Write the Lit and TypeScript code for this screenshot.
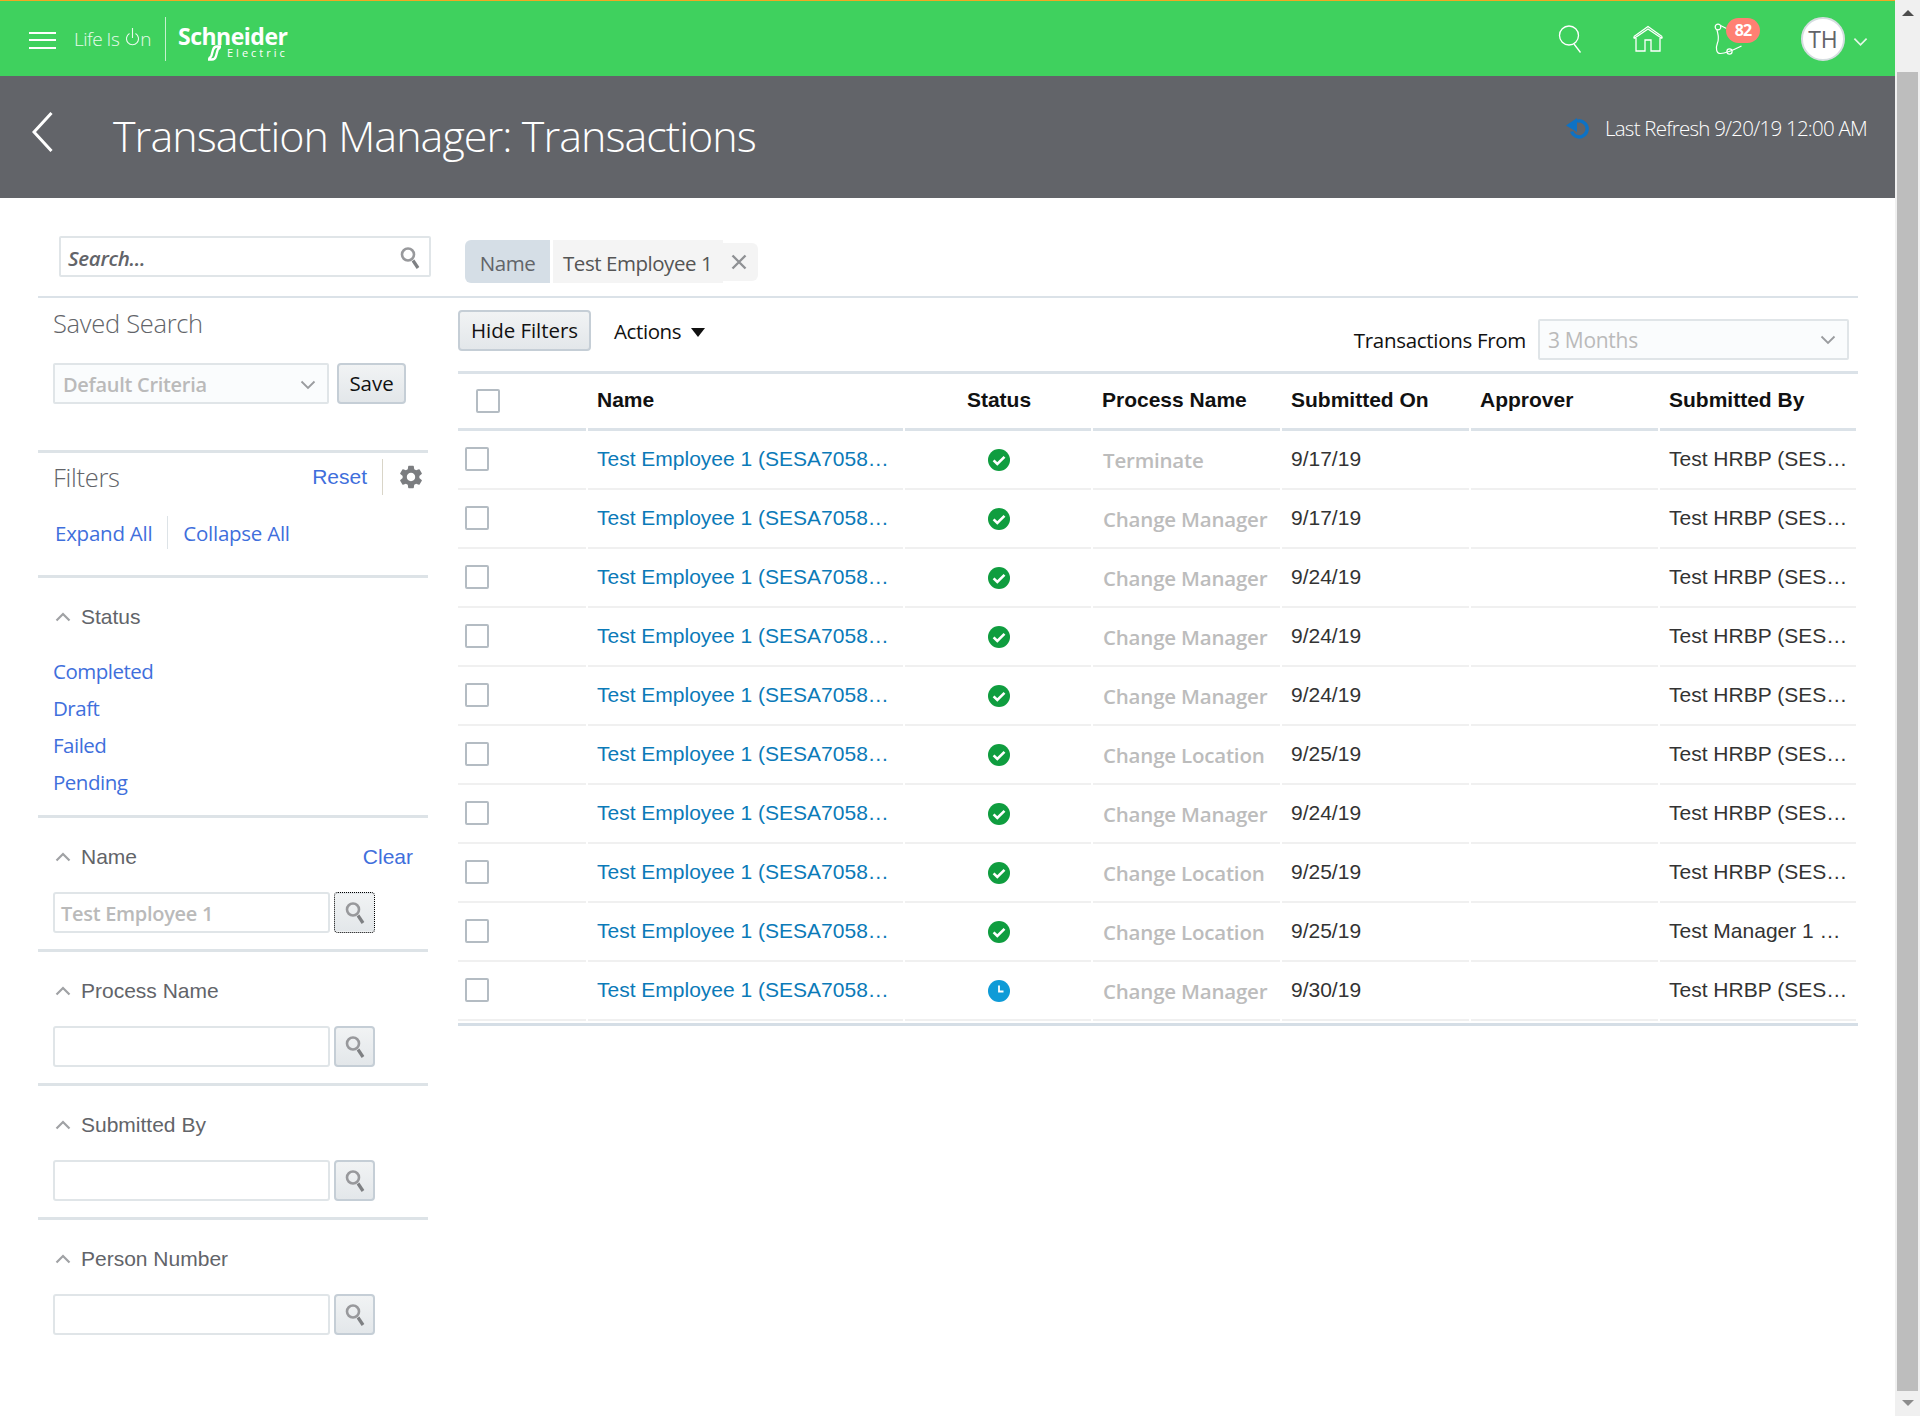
import { css, html, LitElement, svg } from 'lit';
import { customElement } from 'lit/decorators.js';

const HRBP = 'Test HRBP (SES…';

const ROWS = [
    { process: 'Terminate', date: '9/17/19', by: HRBP, status: 'done' },
    { process: 'Change Manager', date: '9/17/19', by: HRBP, status: 'done' },
    { process: 'Change Manager', date: '9/24/19', by: HRBP, status: 'done' },
    { process: 'Change Manager', date: '9/24/19', by: HRBP, status: 'done' },
    { process: 'Change Manager', date: '9/24/19', by: HRBP, status: 'done' },
    { process: 'Change Location', date: '9/25/19', by: HRBP, status: 'done' },
    { process: 'Change Manager', date: '9/24/19', by: HRBP, status: 'done' },
    { process: 'Change Location', date: '9/25/19', by: HRBP, status: 'done' },
    { process: 'Change Location', date: '9/25/19', by: 'Test Manager 1 …', status: 'done' },
    { process: 'Change Manager', date: '9/30/19', by: HRBP, status: 'pending' },
];

const GEAR =
    'M19.14 12.94c.04-.3.06-.61.06-.94 0-.32-.02-.64-.07-.94l2.03-1.58c.18-.14.23-.41.12-.61l-1.92-3.32c-.12-.22-.37-.29-.59-.22l-2.39.96c-.5-.38-1.03-.7-1.62-.94l-.36-2.54c-.04-.24-.24-.41-.48-.41h-3.84c-.24 0-.43.17-.47.41l-.36 2.54c-.59.24-1.13.57-1.62.94l-2.39-.96c-.22-.08-.47 0-.59.22L2.74 8.87c-.12.21-.08.47.12.61l2.03 1.58c-.05.3-.09.63-.09.94s.02.64.07.94l-2.03 1.58c-.18.14-.23.41-.12.61l1.92 3.32c.12.22.37.29.59.22l2.39-.96c.5.38 1.03.7 1.62.94l.36 2.54c.05.24.24.41.48.41h3.84c.24 0 .44-.17.47-.41l.36-2.54c.59-.24 1.13-.56 1.62-.94l2.39.96c.22.08.47 0 .59-.22l1.92-3.32c.12-.22.07-.47-.12-.61l-2.01-1.58zM12 15.6c-1.98 0-3.6-1.62-3.6-3.6s1.62-3.6 3.6-3.6 3.6 1.62 3.6 3.6-1.62 3.6-3.6 3.6z';

const magnifier = () => html`
    <svg class="mag" viewBox="0 0 20 24" width="20" height="24">
        <circle cx="8" cy="8.500" r="6" fill="none" stroke="#98999c" stroke-width="2.600"></circle>
        <path d="M13 14.500l5 7.500" stroke="#7e8083" stroke-width="3.200" fill="none"></path>
    </svg>
`;

const chevronDown = (color = '#8b8d90', w = 16, h = 10) => html`
    <svg viewBox="0 0 16 10" width="${w}" height="${h}">
        <path d="M1.500 1.500L8 8l6.500-6.500" fill="none" stroke="${color}" stroke-width="1.800"></path>
    </svg>
`;

const statusIcon = (status: string) =>
    status === 'done'
        ? html`<svg viewBox="0 0 22 22" width="22" height="22">
              <circle cx="11" cy="11" r="11" fill="#0f9d3f"></circle>
              ${svg`<path d="M5.600 11.400l3.700 3.600 7.200-7.200" fill="none" stroke="#fff" stroke-width="2.600"></path>`}
          </svg>`
        : html`<svg viewBox="0 0 22 22" width="22" height="22">
              <circle cx="11" cy="11" r="11" fill="#0f9bd7"></circle>
              ${svg`<path d="M11 5.500v6h4.500" fill="none" stroke="#fff" stroke-width="1.800"></path>`}
          </svg>`;

@customElement('app-root')
export class AppRoot extends LitElement {
    static override styles = css`
        :host {
            display: block;
            width: 1920px;
            height: 1416px;
            overflow: hidden;
            background: #fff;
            font-family: 'Liberation Sans', Arial, sans-serif;
            color: #333;
        }
        .page {
            display: flex;
            height: 1416px;
        }
        .content {
            width: 1895px;
        }
        .scrollbar {
            width: 25px;
            height: 1416px;
            background: #f0f0f0;
            display: flex;
            flex-direction: column;
            align-items: center;
            padding: 0 2px;
            box-sizing: border-box;
        }
        .sb-btn {
            height: 72px;
            display: flex;
            justify-content: center;
            padding-top: 10px;
            box-sizing: border-box;
        }
        .sb-btn.down {
            height: 25px;
            padding-top: 9px;
        }
        .thumb {
            width: 21px;
            height: 1319px;
            background: #bdbdbd;
        }
        .arrow-up {
            width: 0;
            height: 0;
            border: 6px solid transparent;
            border-top: 0;
            border-bottom: 6px solid #4d4d4d;
        }
        .arrow-down {
            width: 0;
            height: 0;
            border: 6px solid transparent;
            border-bottom: 0;
            border-top: 6px solid #8c8c8c;
        }

        /* top bar */
        .topbar {
            height: 75px;
            border-top: 1px solid #f5a623;
            background: #3fd15e;
            display: flex;
            align-items: center;
            color: #fff;
        }
        .burger {
            width: 27px;
            height: 17px;
            margin: 3px 0 0 29px;
            border-top: 2px solid #fff;
            border-bottom: 2px solid #fff;
            position: relative;
            box-sizing: border-box;
        }
        .burger::after {
            content: '';
            position: absolute;
            left: 0;
            right: 0;
            top: 5.500px;
            height: 2px;
            background: #fff;
        }
        .lifeison {
            margin-left: 18px;
            width: 80px;
            font: 300 19px 'Open Sans', sans-serif;
            letter-spacing: -0.500px;
            white-space: nowrap;
            display: flex;
            align-items: center;
            color: #e8faec;
        }
        .lifeison svg {
            margin: -4px 1px 0 7px;
        }
        .logo-div {
            width: 1px;
            height: 44px;
            margin: 0 12px 0 11px;
            background: rgba(255, 255, 255, 0.7);
        }
        .logo {
            width: 112px;
            display: flex;
            flex-direction: column;
            padding-top: 9px;
        }
        .logo-name {
            font: 700 23px/22px 'Open Sans', sans-serif;
            letter-spacing: -0.500px;
        }
        .logo-sub {
            display: flex;
            align-items: center;
            font: 400 11px/14px 'Open Sans', sans-serif;
            letter-spacing: 3px;
            margin: -2px 0 0 28px;
        }
        .logo-sub svg {
            margin-right: 4px;
        }
        .top-right {
            margin-left: auto;
            display: flex;
            align-items: center;
        }
        .ti-search {
            margin-right: 51px;
        }
        .ti-home {
            margin-right: 51px;
        }
        .bell {
            position: relative;
            width: 28px;
            height: 32px;
            margin-right: 59px;
        }
        .badge {
            position: absolute;
            left: 12px;
            top: -5px;
            width: 34px;
            height: 25px;
            border-radius: 13px;
            background: #ff8073;
            color: #fff;
            font: 700 16px/25px 'Open Sans', sans-serif;
            letter-spacing: -0.800px;
            text-align: center;
        }
        .avatar {
            width: 44px;
            height: 44px;
            border-radius: 50%;
            background: #fff;
            border: 2px solid #d5dde0;
            box-sizing: border-box;
            color: #626469;
            font: 400 23px/40px 'Open Sans', sans-serif;
            text-align: center;
        }
        .ti-chevron {
            margin: 6px 27px 0 8px;
        }

        /* title band */
        .band {
            height: 122px;
            background: #626469;
            color: #fff;
            display: flex;
            position: relative;
        }
        .back {
            margin: 36px 0 0 32px;
        }
        .title {
            margin: 30px 0 0 60px;
            font: 300 43px/60px 'Open Sans', sans-serif;
            letter-spacing: -0.950px;
            white-space: nowrap;
        }
        .refresh {
            margin: 30px 28px 0 auto;
            display: flex;
            align-items: center;
            height: 44px;
            font: 300 20.500px 'Open Sans', sans-serif;
            letter-spacing: -0.750px;
            white-space: nowrap;
        }
        .refresh svg {
            margin-right: 15px;
        }

        /* filter bar */
        .filterbar {
            height: 98px;
            width: 1820px;
            margin-left: 38px;
            border-bottom: 2px solid #dbe2e8;
            display: flex;
        }
        .search {
            margin: 38px 0 0 21px;
            width: 372px;
            height: 41px;
            box-sizing: border-box;
            border: 2px solid #e0e5e8;
            border-radius: 2px;
            display: flex;
            align-items: center;
            justify-content: space-between;
            padding: 2px 9px 0 7px;
            font: italic 600 20.500px 'Open Sans', sans-serif;
            letter-spacing: -0.300px;
            color: #626469;
        }
        .chips {
            margin: 42px 0 0 34px;
            display: flex;
            align-items: flex-start;
            font: 400 20.500px/47px 'Open Sans', sans-serif;
            letter-spacing: -0.450px;
        }
        .chip-name {
            width: 85px;
            height: 43px;
            background: #d5dee6;
            color: #626469;
            text-align: center;
            border-radius: 6px 0 0 6px;
        }
        .chip-value {
            margin-left: 3px;
            width: 170px;
            height: 43px;
            padding-left: 10px;
            box-sizing: border-box;
            background: #f4f4f4;
            color: #555;
        }
        .chip-x {
            margin-top: 3px;
            width: 35px;
            height: 38px;
            background: #f4f4f4;
            border-radius: 0 6px 6px 0;
            display: flex;
            align-items: center;
            justify-content: center;
            padding-right: 4px;
            box-sizing: border-box;
        }

        .columns {
            display: flex;
            margin-left: 38px;
        }

        /* sidebar */
        .sidebar {
            width: 390px;
            font-size: 21px;
            color: #626469;
        }
        .saved {
            height: 155px;
            border-bottom: 3px solid #dde3e7;
            padding: 0 0 0 15px;
            box-sizing: border-box;
        }
        .light-head {
            font: 300 25.500px/34px 'Open Sans', sans-serif;
            letter-spacing: -0.300px;
            padding-top: 8px;
            color: #626469;
        }
        .saved-row {
            display: flex;
            margin-top: 23px;
            gap: 8px;
        }
        .select {
            box-sizing: border-box;
            border: 2px solid #e0e5e8;
            border-radius: 2px;
            background: #fafcfd;
            display: flex;
            align-items: center;
            justify-content: space-between;
            color: #bababa;
            font: 600 20px 'Open Sans', sans-serif;
            letter-spacing: -0.300px;
        }
        .select.criteria {
            width: 276px;
            height: 41px;
            padding: 2px 11px 0 8px;
        }
        .btn {
            box-sizing: border-box;
            height: 41px;
            border: 2px solid #c5ced6;
            border-radius: 4px;
            background: linear-gradient(#f1f3f4, #e3e7ea);
            color: #111;
            font: 400 20.500px/37px 'Open Sans', sans-serif;
            letter-spacing: -0.050px;
            text-align: center;
        }
        .btn.save {
            width: 69px;
        }
        .filters-head {
            height: 125px;
            border-bottom: 3px solid #dde3e7;
            box-sizing: border-box;
        }
        .filters-top {
            display: flex;
            align-items: center;
            height: 47px;
            padding: 0 3px 0 15px;
        }
        .filters-top .light-head {
            padding-top: 0;
        }
        .reset {
            margin-left: auto;
            color: #3f6fdc;
        }
        .vsep {
            width: 1px;
            background: #d9d5c8;
            height: 36px;
            margin: 0 14px 0 15px;
        }
        .expand-row {
            display: flex;
            align-items: center;
            height: 33px;
            margin-top: 16px;
            padding-left: 17px;
            font: 400 20.500px 'Open Sans', sans-serif;
            letter-spacing: -0.250px;
            color: #3f6fdc;
        }
        .expand-row .vsep {
            background: #dde3e7;
            height: 33px;
            margin: 0 15px 0 15px;
        }
        .group {
            border-bottom: 3px solid #dde3e7;
            box-sizing: border-box;
            padding: 0 0 0 15px;
        }
        .group.status {
            height: 240px;
        }
        .group.field {
            height: 134px;
        }
        .group.last {
            border-bottom: 0;
        }
        .group-head {
            display: flex;
            align-items: center;
            height: 30px;
            padding-top: 24px;
        }
        .group-head svg {
            margin: 0 10px 0 2px;
        }
        .clear {
            margin-left: auto;
            margin-right: 15px;
            color: #3f6fdc;
        }
        .status-list {
            margin-top: 21px;
            font: 400 20.500px/37px 'Open Sans', sans-serif;
            letter-spacing: -0.500px;
            color: #3f6fdc;
        }
        .field-row {
            display: flex;
            margin-top: 20px;
            gap: 4px;
        }
        .field-input {
            box-sizing: border-box;
            width: 277px;
            height: 41px;
            border: 2px solid #e0e5e8;
            border-radius: 3px;
            padding-left: 6px;
            color: #bababa;
            font: 600 20px/40px 'Open Sans', sans-serif;
            letter-spacing: -0.300px;
        }
        .field-btn {
            box-sizing: border-box;
            width: 41px;
            height: 41px;
            border: 2px solid #c5ced6;
            border-radius: 4px;
            background: linear-gradient(#f1f3f4, #e3e7ea);
            display: flex;
            align-items: center;
            justify-content: center;
        }
        .field-btn.focus {
            outline: 1px dotted #000;
            outline-offset: -1px;
            border-color: transparent;
        }

        /* main */
        .main {
            width: 1400px;
            margin-left: 30px;
        }
        .toolbar {
            height: 73px;
            display: flex;
            color: #111;
        }
        .btn.hide {
            width: 133px;
            margin-top: 12px;
        }
        .actions {
            margin: 12px 0 0 23px;
            height: 41px;
            display: flex;
            align-items: center;
            gap: 10px;
            font: 400 20.500px 'Open Sans', sans-serif;
            letter-spacing: -0.400px;
        }
        .caret {
            width: 0;
            height: 0;
            margin-top: 3px;
            border: 7px solid transparent;
            border-top: 9px solid #111;
            border-bottom: 0;
        }
        .from {
            margin: 21px 0 0 auto;
            height: 41px;
            display: flex;
            align-items: center;
            font: 400 20.500px 'Open Sans', sans-serif;
            letter-spacing: -0.300px;
        }
        .select.months {
            width: 311px;
            height: 41px;
            margin: 0 9px 0 12px;
            padding: 0 11px 0 8px;
            font-weight: 400;
            font-size: 21px;
        }
        .table {
            border-top: 3px solid #dbe2e8;
            display: grid;
            grid-template-columns: 130px 317px 188px 189px 189px 189px 198px;
        }
        .cell {
            box-sizing: border-box;
            height: 59px;
            margin-right: 2px;
            border-bottom: 2px solid #f0f0f0;
            padding-left: 9px;
            display: flex;
            align-items: center;
            white-space: nowrap;
            font-size: 21px;
            color: #333;
            overflow: hidden;
        }
        .cell.text {
            padding-bottom: 2px;
        }
        .cell.head {
            height: 57px;
            border-bottom: 3px solid #dbe2e8;
            padding-bottom: 2px;
            font-weight: 700;
            color: #111;
        }
        .cell.center {
            justify-content: center;
            padding-left: 2px;
        }
        .cell.check {
            padding-left: 7px;
            padding-bottom: 1px;
        }
        .cell.head.check {
            padding-left: 18px;
        }
        .box {
            width: 24px;
            height: 24px;
            box-sizing: border-box;
            border: 2px solid #b4bcc3;
            border-radius: 2px;
            background: #fff;
        }
        .link {
            color: #0b7ab8;
        }
        .process {
            font: 600 20.500px 'Open Sans', sans-serif;
            letter-spacing: -0.200px;
            color: #bcbcbc;
            padding-left: 10px;
        }
        .table-end {
            height: 3px;
            margin-top: 2px;
            background: #d5dee6;
        }
    `;

    private fieldGroup(label: string, value = '', clear = false, focus = false, last = false) {
        return html`
            <div class="group field ${last ? 'last' : ''}">
                <div class="group-head">
                    ${this.upChevron()}
                    <span>${label}</span>
                    ${clear ? html`<span class="clear">Clear</span>` : ''}
                </div>
                <div class="field-row">
                    <div class="field-input">${value}</div>
                    <div class="field-btn ${focus ? 'focus' : ''}">${magnifier()}</div>
                </div>
            </div>
        `;
    }

    private upChevron() {
        return html`<svg viewBox="0 0 16 10" width="16" height="10">
            <path d="M1.500 8.500L8 2l6.500 6.500" fill="none" stroke="#a0a2a5" stroke-width="2.200"></path>
        </svg>`;
    }

    private renderTopbar() {
        return html`
            <div class="topbar">
                <div class="burger"></div>
                <div class="lifeison">
                    Life Is
                    <svg viewBox="0 0 13 19" width="13" height="19">
                        <path d="M3.500 6.500a6 6 0 1 0 6 0M6.500 1v10" fill="none" stroke="#e8faec" stroke-width="1.100"></path>
                    </svg>
                    n
                </div>
                <div class="logo-div"></div>
                <div class="logo">
                    <span class="logo-name">Schneider</span>
                    <span class="logo-sub">
                        <svg viewBox="0 0 17 16" width="17" height="16">
                            <path
                                d="M15 1.500H11C8.500 1.500 7.500 3 7 5L5.500 10.500C5 12.500 3.500 13 2.500 12.500M2 14.500H6C8.500 14.500 9.500 13 10 11L11.500 5.500C12 3.500 13.500 3 14.500 3.500"
                                fill="none"
                                stroke="#fff"
                                stroke-width="2.400"
                            ></path>
                        </svg>
                        Electric
                    </span>
                </div>
                <div class="top-right">
                    <svg class="ti-search" viewBox="0 0 24 28" width="24" height="28">
                        <circle cx="11" cy="10.500" r="9.500" fill="none" stroke="#fff" stroke-width="1.300"></circle>
                        <path d="M16 19l6.500 8.500" stroke="#fff" stroke-width="1.300" fill="none"></path>
                    </svg>
                    <svg class="ti-home" viewBox="0 0 30 27" width="30" height="27">
                        <path
                            d="M1 11.500L15 1.500l14 10M1 13.500L15 4l14 9.500M1 11.500v2M29 11.500v2M3 13v13h9V15h6v11h9V13"
                            fill="none"
                            stroke="#fff"
                            stroke-width="1.300"
                        ></path>
                    </svg>
                    <div class="bell">
                        <svg viewBox="0 0 28 32" width="28" height="32">
                            <circle cx="4" cy="4" r="2.800" fill="none" stroke="#fff" stroke-width="1.200"></circle>
                            <circle cx="15.500" cy="28.500" r="2.600" fill="none" stroke="#fff" stroke-width="1.200"></circle>
                            <path
                                d="M3 6.800c1 5 2.500 8 .5 13-1.800 5-1.500 10.700 3 10.700 6 0 14-4 21-7.500M6.500 2.500l6 3"
                                fill="none"
                                stroke="#fff"
                                stroke-width="1.200"
                            ></path>
                        </svg>
                        <span class="badge">82</span>
                    </div>
                    <div class="avatar">TH</div>
                    <div class="ti-chevron">${chevronDown('#e4f7e8', 15, 10)}</div>
                </div>
            </div>
        `;
    }

    private renderBand() {
        return html`
            <div class="band">
                <svg class="back" viewBox="0 0 21 40" width="21" height="40">
                    <path d="M19.500 1L2 20l17.500 19" fill="none" stroke="#fff" stroke-width="3"></path>
                </svg>
                <div class="title">Transaction Manager: Transactions</div>
                <div class="refresh">
                    <svg viewBox="0 0 24 21" width="24" height="21">
                        <path d="M11 3.200A8 8 0 1 1 5.600 13.500" fill="none" stroke="#0d72c5" stroke-width="3.400"></path>
                        <path d="M0 7.500L11 0v14z" fill="#0d72c5"></path>
                    </svg>
                    Last Refresh 9/20/19 12:00 AM
                </div>
            </div>
        `;
    }

    private renderFilterBar() {
        return html`
            <div class="filterbar">
                <div class="search">
                    <span>Search...</span>
                    ${magnifier()}
                </div>
                <div class="chips">
                    <div class="chip-name">Name</div>
                    <div class="chip-value">Test Employee 1</div>
                    <div class="chip-x">
                        <svg viewBox="0 0 16 16" width="16" height="16">
                            <path d="M1.500 1.500l13 13M14.500 1.500l-13 13" stroke="#8f9194" stroke-width="2.400"></path>
                        </svg>
                    </div>
                </div>
            </div>
        `;
    }

    private renderSidebar() {
        return html`
            <aside class="sidebar">
                <div class="saved">
                    <div class="light-head">Saved Search</div>
                    <div class="saved-row">
                        <div class="select criteria"><span>Default Criteria</span>${chevronDown('#9a9c9f')}</div>
                        <div class="btn save">Save</div>
                    </div>
                </div>
                <div class="filters-head">
                    <div class="filters-top">
                        <span class="light-head">Filters</span>
                        <span class="reset">Reset</span>
                        <span class="vsep"></span>
                        <svg viewBox="0 0 24 24" width="28" height="28"><path d="${GEAR}" fill="#7b7d80"></path></svg>
                    </div>
                    <div class="expand-row">
                        <span>Expand All</span>
                        <span class="vsep"></span>
                        <span>Collapse All</span>
                    </div>
                </div>
                <div class="group status">
                    <div class="group-head">${this.upChevron()}<span>Status</span></div>
                    <div class="status-list">
                        <div>Completed</div>
                        <div>Draft</div>
                        <div>Failed</div>
                        <div>Pending</div>
                    </div>
                </div>
                ${this.fieldGroup('Name', 'Test Employee 1', true, true)} ${this.fieldGroup('Process Name')}
                ${this.fieldGroup('Submitted By')} ${this.fieldGroup('Person Number', '', false, false, true)}
            </aside>
        `;
    }

    private renderTable() {
        return html`
            <div class="table">
                <div class="cell head check"><span class="box"></span></div>
                <div class="cell head">Name</div>
                <div class="cell head center">Status</div>
                <div class="cell head">Process Name</div>
                <div class="cell head">Submitted On</div>
                <div class="cell head">Approver</div>
                <div class="cell head">Submitted By</div>
                ${ROWS.map(
                    (row) => html`
                        <div class="cell check"><span class="box"></span></div>
                        <div class="cell text link">Test Employee 1 (SESA7058…</div>
                        <div class="cell center">${statusIcon(row.status)}</div>
                        <div class="cell process">${row.process}</div>
                        <div class="cell text">${row.date}</div>
                        <div class="cell"></div>
                        <div class="cell text">${row.by}</div>
                    `,
                )}
            </div>
            <div class="table-end"></div>
        `;
    }

    override render() {
        return html`
            <div class="page">
                <div class="content">
                    ${this.renderTopbar()} ${this.renderBand()} ${this.renderFilterBar()}
                    <div class="columns">
                        ${this.renderSidebar()}
                        <main class="main">
                            <div class="toolbar">
                                <div class="btn hide">Hide Filters</div>
                                <div class="actions">Actions <span class="caret"></span></div>
                                <div class="from">
                                    Transactions From
                                    <div class="select months"><span>3 Months</span>${chevronDown('#9a9c9f')}</div>
                                </div>
                            </div>
                            ${this.renderTable()}
                        </main>
                    </div>
                </div>
                <div class="scrollbar">
                    <div class="sb-btn"><span class="arrow-up"></span></div>
                    <div class="thumb"></div>
                    <div class="sb-btn down"><span class="arrow-down"></span></div>
                </div>
            </div>
        `;
    }
}
